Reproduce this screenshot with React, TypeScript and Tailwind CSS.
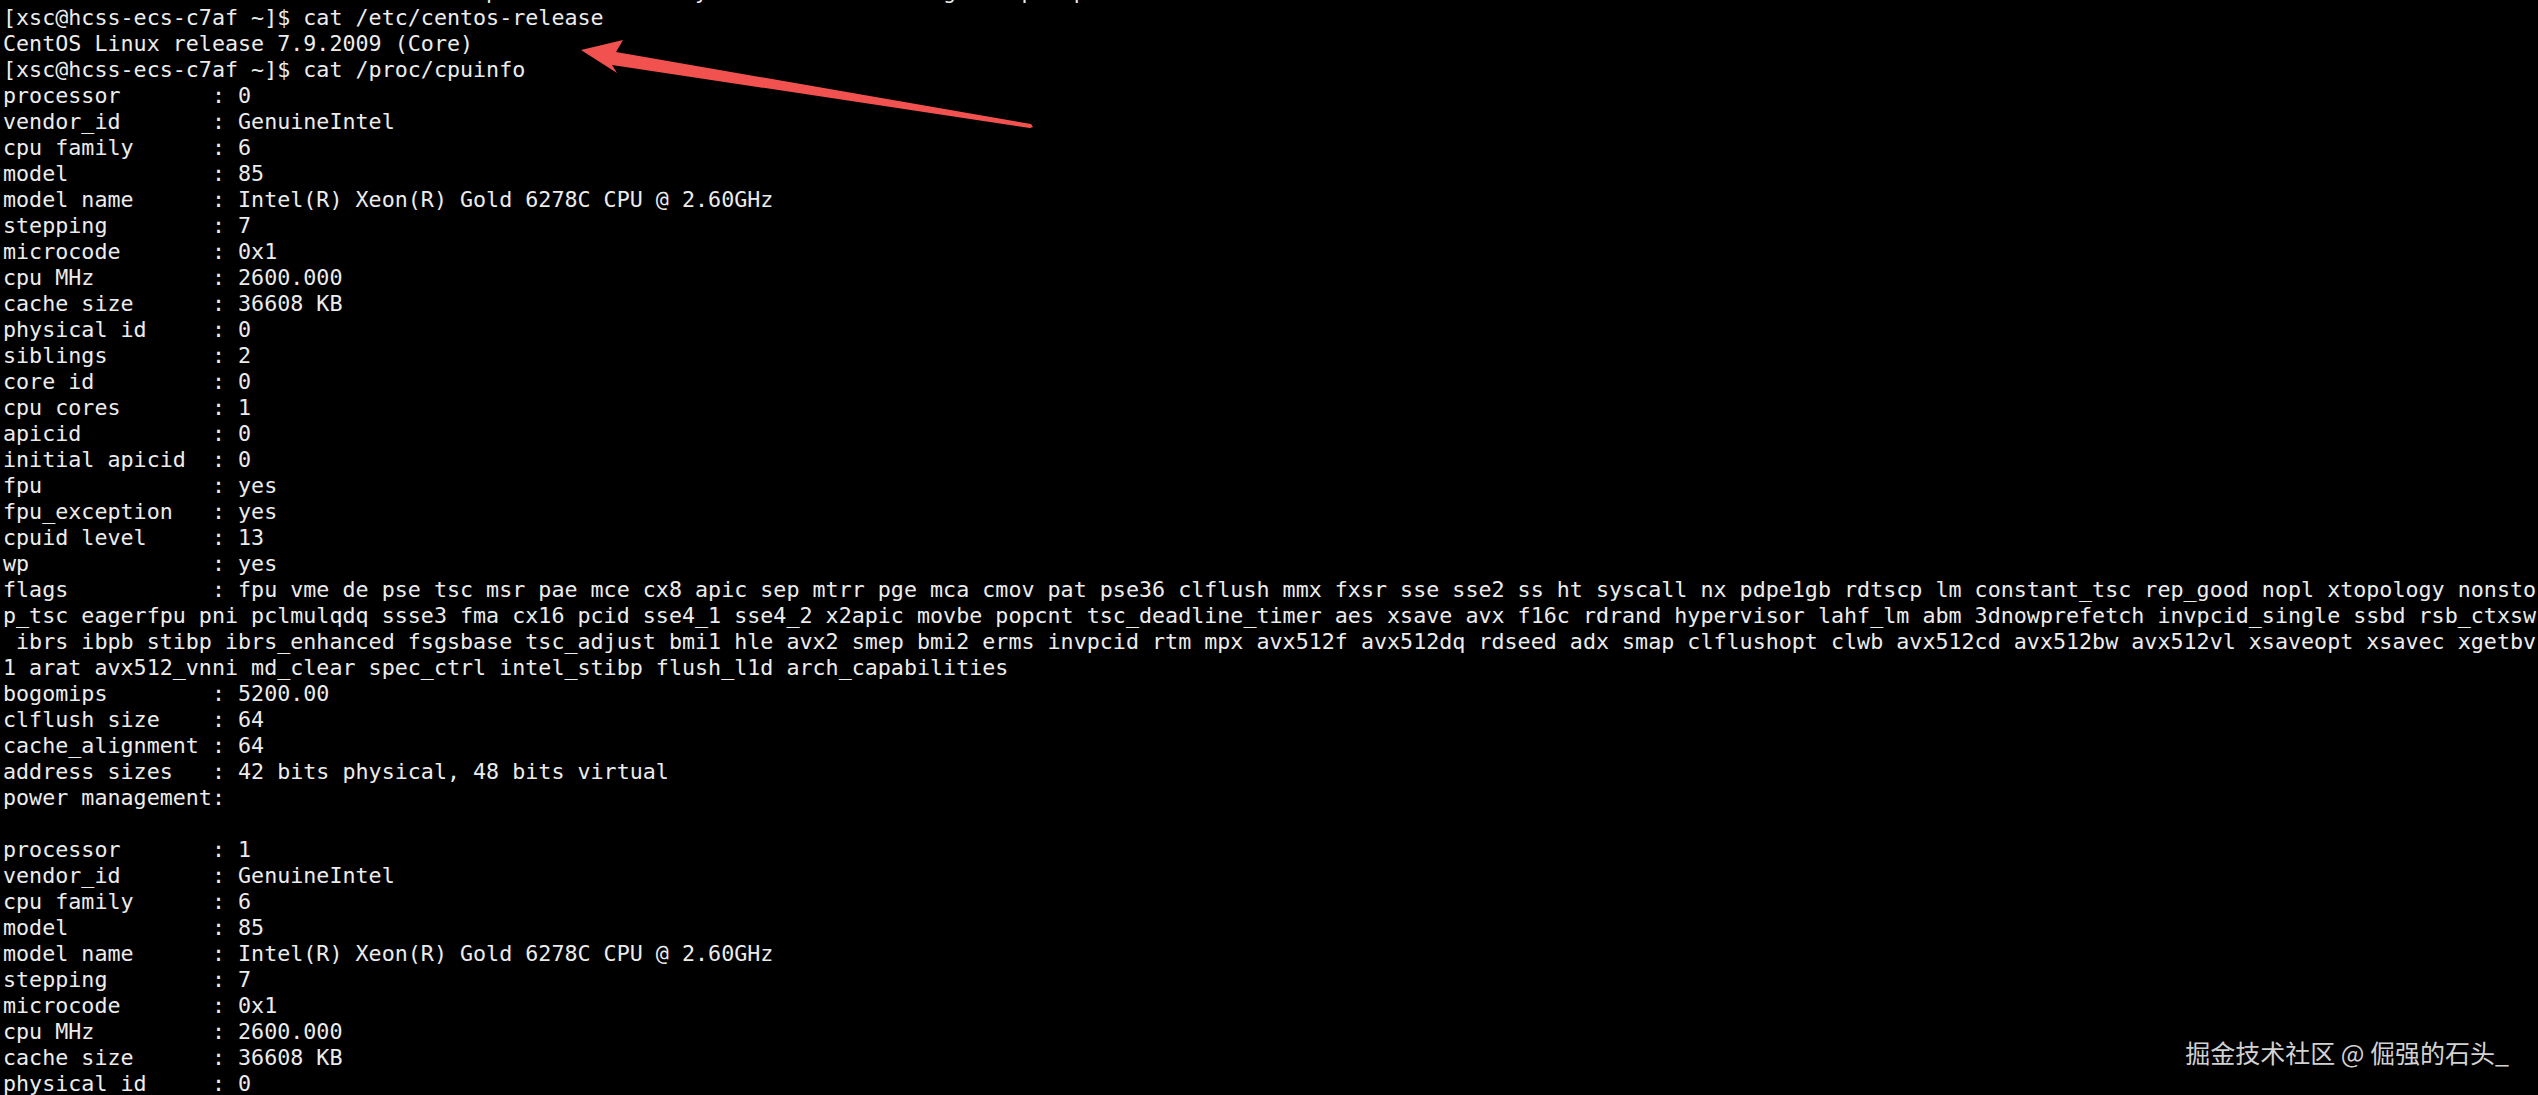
import React from "react";

// terminal is 194 columns wide
const COLS = 194;

const field = (key: string, value: string) => `${key.padEnd(16)}: ${value}`;

const flags =
  "fpu vme de pse tsc msr pae mce cx8 apic sep mtrr pge mca cmov pat pse36 clflush mmx fxsr sse sse2 ss ht syscall nx pdpe1gb rdtscp lm constant_tsc rep_good nopl xtopology nonstop_tsc eagerfpu pni pclmulqdq ssse3 fma cx16 pcid sse4_1 sse4_2 x2apic movbe popcnt tsc_deadline_timer aes xsave avx f16c rdrand hypervisor lahf_lm abm 3dnowprefetch invpcid_single ssbd rsb_ctxsw ibrs ibpb stibp ibrs_enhanced fsgsbase tsc_adjust bmi1 hle avx2 smep bmi2 erms invpcid rtm mpx avx512f avx512dq rdseed adx smap clflushopt clwb avx512cd avx512bw avx512vl xsaveopt xsavec xgetbv1 arat avx512_vnni md_clear spec_ctrl intel_stibp flush_l1d arch_capabilities";

// wrap a long line the way the terminal does
const wrap = (line: string) => {
  const out: string[] = [];
  for (let i = 0; i < line.length; i += COLS) out.push(line.slice(i, i + COLS));
  return out;
};

const head = (n: string) => [
  field("processor", n),
  field("vendor_id", "GenuineIntel"),
  field("cpu family", "6"),
  field("model", "85"),
  field("model name", "Intel(R) Xeon(R) Gold 6278C CPU @ 2.60GHz"),
  field("stepping", "7"),
  field("microcode", "0x1"),
  field("cpu MHz", "2600.000"),
  field("cache size", "36608 KB"),
  field("physical id", "0"),
];

// previous line is cut off at the top, only descenders show
const cutLine =
  " ".repeat(37) + "p" + " ".repeat(15) + "y" + " ".repeat(18) + "g" + " ".repeat(5) + "p" + " ".repeat(3) + "p";

const lines: string[] = [
  cutLine,
  "[xsc@hcss-ecs-c7af ~]$ cat /etc/centos-release",
  "CentOS Linux release 7.9.2009 (Core)",
  "[xsc@hcss-ecs-c7af ~]$ cat /proc/cpuinfo",
  ...head("0"),
  field("siblings", "2"),
  field("core id", "0"),
  field("cpu cores", "1"),
  field("apicid", "0"),
  field("initial apicid", "0"),
  field("fpu", "yes"),
  field("fpu_exception", "yes"),
  field("cpuid level", "13"),
  field("wp", "yes"),
  ...wrap(field("flags", flags)),
  field("bogomips", "5200.00"),
  field("clflush size", "64"),
  field("cache_alignment", "64"),
  field("address sizes", "42 bits physical, 48 bits virtual"),
  "power management:",
  "",
  ...head("1"),
];

const Arrow = () => (
  <svg
    className="absolute left-0 top-0 pointer-events-none"
    width="1100"
    height="140"
    viewBox="0 0 1100 140"
  >
    <polygon
      points="581,50 623,40 616,52 1031,124 1033,127 1030,128 612,65 617,73"
      fill="#f2524f"
    />
  </svg>
);

export default function App() {
  return (
    <div className="relative w-[2538px] h-[1095px] overflow-hidden bg-black">
      <div
        className="-mt-[21px] pl-[3px] text-[#ececec] text-[21.7px] leading-[26px] whitespace-pre"
        style={{ fontFamily: '"DejaVu Sans Mono", monospace' }}
      >
        {lines.map((l, i) => (
          <div key={i} className="h-[26px]">
            {l}
          </div>
        ))}
      </div>

      <Arrow />

      <div
        className="absolute right-[29px] bottom-[30px] text-[25px] leading-none text-[#d2d2d2]"
        style={{ fontFamily: '"Noto Sans CJK SC", "Noto Sans", sans-serif' }}
      >
        掘金技术社区 @ 倔强的石头_
      </div>
    </div>
  );
}
